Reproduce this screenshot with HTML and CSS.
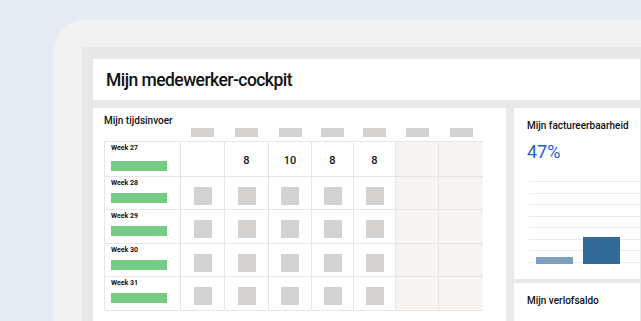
FILE: index.html
```html
<!DOCTYPE html>
<html lang="nl">
<head>
<meta charset="utf-8">
<title>Mijn medewerker-cockpit</title>
<link rel="stylesheet" href="styles.css">
</head>
<body>
<div class="device">
  <div class="screen">
    <header class="header"><h1 class="page-title">Mijn medewerker-cockpit</h1></header>
    <div class="main">
      <section class="card card-time">
        <h2 class="card-title">Mijn tijdsinvoer</h2>
        <div class="grid grid-head">
          <div></div>
          <div class="hcell"><span class="hbar"></span></div>
          <div class="hcell"><span class="hbar"></span></div>
          <div class="hcell"><span class="hbar"></span></div>
          <div class="hcell"><span class="hbar"></span></div>
          <div class="hcell"><span class="hbar"></span></div>
          <div class="hcell"><span class="hbar"></span></div>
          <div class="hcell"><span class="hbar"></span></div>
        </div>
        <div class="grid grid-body">
          <div class="week first"><span class="week-label">Week 27</span><span class="week-bar"></span></div>
          <div class="cell num"></div>
          <div class="cell num">8</div>
          <div class="cell num">10</div>
          <div class="cell num">8</div>
          <div class="cell num">8</div>
          <div class="cell off"></div>
          <div class="cell off"></div>

          <div class="week"><span class="week-label">Week 28</span><span class="week-bar"></span></div>
          <div class="cell sq"><span class="box"></span></div>
          <div class="cell sq"><span class="box"></span></div>
          <div class="cell sq"><span class="box"></span></div>
          <div class="cell sq"><span class="box"></span></div>
          <div class="cell sq"><span class="box"></span></div>
          <div class="cell off"></div>
          <div class="cell off"></div>

          <div class="week"><span class="week-label">Week 29</span><span class="week-bar"></span></div>
          <div class="cell sq"><span class="box"></span></div>
          <div class="cell sq"><span class="box"></span></div>
          <div class="cell sq"><span class="box"></span></div>
          <div class="cell sq"><span class="box"></span></div>
          <div class="cell sq"><span class="box"></span></div>
          <div class="cell off"></div>
          <div class="cell off"></div>

          <div class="week"><span class="week-label">Week 30</span><span class="week-bar"></span></div>
          <div class="cell sq"><span class="box"></span></div>
          <div class="cell sq"><span class="box"></span></div>
          <div class="cell sq"><span class="box"></span></div>
          <div class="cell sq"><span class="box"></span></div>
          <div class="cell sq"><span class="box"></span></div>
          <div class="cell off"></div>
          <div class="cell off"></div>

          <div class="week"><span class="week-label">Week 31</span><span class="week-bar"></span></div>
          <div class="cell sq"><span class="box"></span></div>
          <div class="cell sq"><span class="box"></span></div>
          <div class="cell sq"><span class="box"></span></div>
          <div class="cell sq"><span class="box"></span></div>
          <div class="cell sq"><span class="box"></span></div>
          <div class="cell off"></div>
          <div class="cell off"></div>
        </div>
      </section>
      <div class="side">
        <section class="card card-bill">
          <h2 class="card-title">Mijn factureerbaarheid</h2>
          <div class="percent">47%</div>
          <div class="chart">
            <span class="bar bar-light" style="height:7px"></span>
            <span class="bar bar-dark" style="height:27px"></span>
          </div>
        </section>
        <section class="card card-leave">
          <h2 class="card-title">Mijn verlofsaldo</h2>
        </section>
      </div>
    </div>
  </div>
</div>
</body>
</html>
```
FILE: styles.css
```css
* { box-sizing: border-box; }
html, body {
  margin: 0;
  padding: 0;
  width: 641px;
  height: 321px;
  overflow: hidden;
  background: #e6ebf2;
  font-family: Roboto, "Liberation Sans", sans-serif;
  color: #111;
}
.device {
  margin: 20px 0 0 54px;
  height: 301px;
  background: #f2f2f2;
  border-top-left-radius: 32px;
  padding: 27px 0 0 28px;
}
.screen {
  height: 100%;
  background: #e8e8e8;
  padding: 12px 1px 0 11px;
}
.header {
  height: 41px;
  background: #fff;
  display: flex;
  align-items: center;
  padding-left: 13px;
}
.page-title {
  margin: 0;
  font-size: 17.5px;
  font-weight: 500;
  letter-spacing: -0.55px;
}
.main {
  display: flex;
  gap: 8px;
  margin-top: 8px;
  height: 220px;
}
.card {
  background: #fff;
}
.card-title {
  margin: 0;
  font-size: 10px;
  line-height: 12px;
  font-weight: 500;
}
.card-time {
  width: 413px;
  padding: 7px 0 0 11px;
}
.grid {
  display: grid;
  grid-template-columns: 75px 43px 43px 42px 41px 41px 42px 44px;
  column-gap: 1px;
  width: 379px;
}
.grid-head {
  padding: 0 1px;
  margin-top: 1px;
  height: 9px;
}
.hcell {
  display: flex;
  justify-content: center;
}
.hbar {
  width: 23px;
  height: 9px;
  background: #d3d2d0;
}
.grid-body {
  margin-top: 4px;
  gap: 1px;
  padding: 1px;
  background: #e6e6e6;
  grid-template-rows: 34px 32px 33px 32px 33px;
}
.week {
  background: #fff;
  padding: 2px 0 0 6px;
  display: flex;
  flex-direction: column;
}
.week-label {
  font-size: 7px;
  line-height: 9px;
  font-weight: 700;
}
.week-bar {
  width: 56px;
  height: 10px;
  margin-top: 5px;
  background: #76cb85;
}
.week.first .week-bar { margin-top: 8px; }
.cell {
  background: #fff;
  display: flex;
  justify-content: center;
  align-items: center;
}
.cell.num {
  font-size: 11px;
  font-weight: 500;
  padding-top: 3px;
}
.cell.sq {
  padding-top: 5px;
}
.box {
  width: 18px;
  height: 18px;
  background: #d3d2d0;
}
.cell.off {
  background: #f7f4f1;
}
.side {
  flex: 1;
  display: flex;
  flex-direction: column;
  gap: 4px;
}
.card-bill {
  height: 171px;
  padding: 12px 0 0 13px;
}
.percent {
  margin-top: 10px;
  font-size: 18px;
  line-height: 20px;
  font-weight: 400;
  color: #1d5fd5;
}
.chart {
  margin: 19px 0 0 2px;
  height: 83px;
  background: repeating-linear-gradient(to bottom, #ececec 0, #ececec 1px, transparent 1px, transparent 11.57px);
  display: flex;
  align-items: flex-end;
  gap: 10px;
  padding-left: 7px;
}
.bar {
  width: 37px;
}
.bar-light { background: #7d9fbe; }
.bar-dark { background: #336a98; }
.card-leave {
  flex: 1;
  padding: 12px 0 0 13px;
}
```
